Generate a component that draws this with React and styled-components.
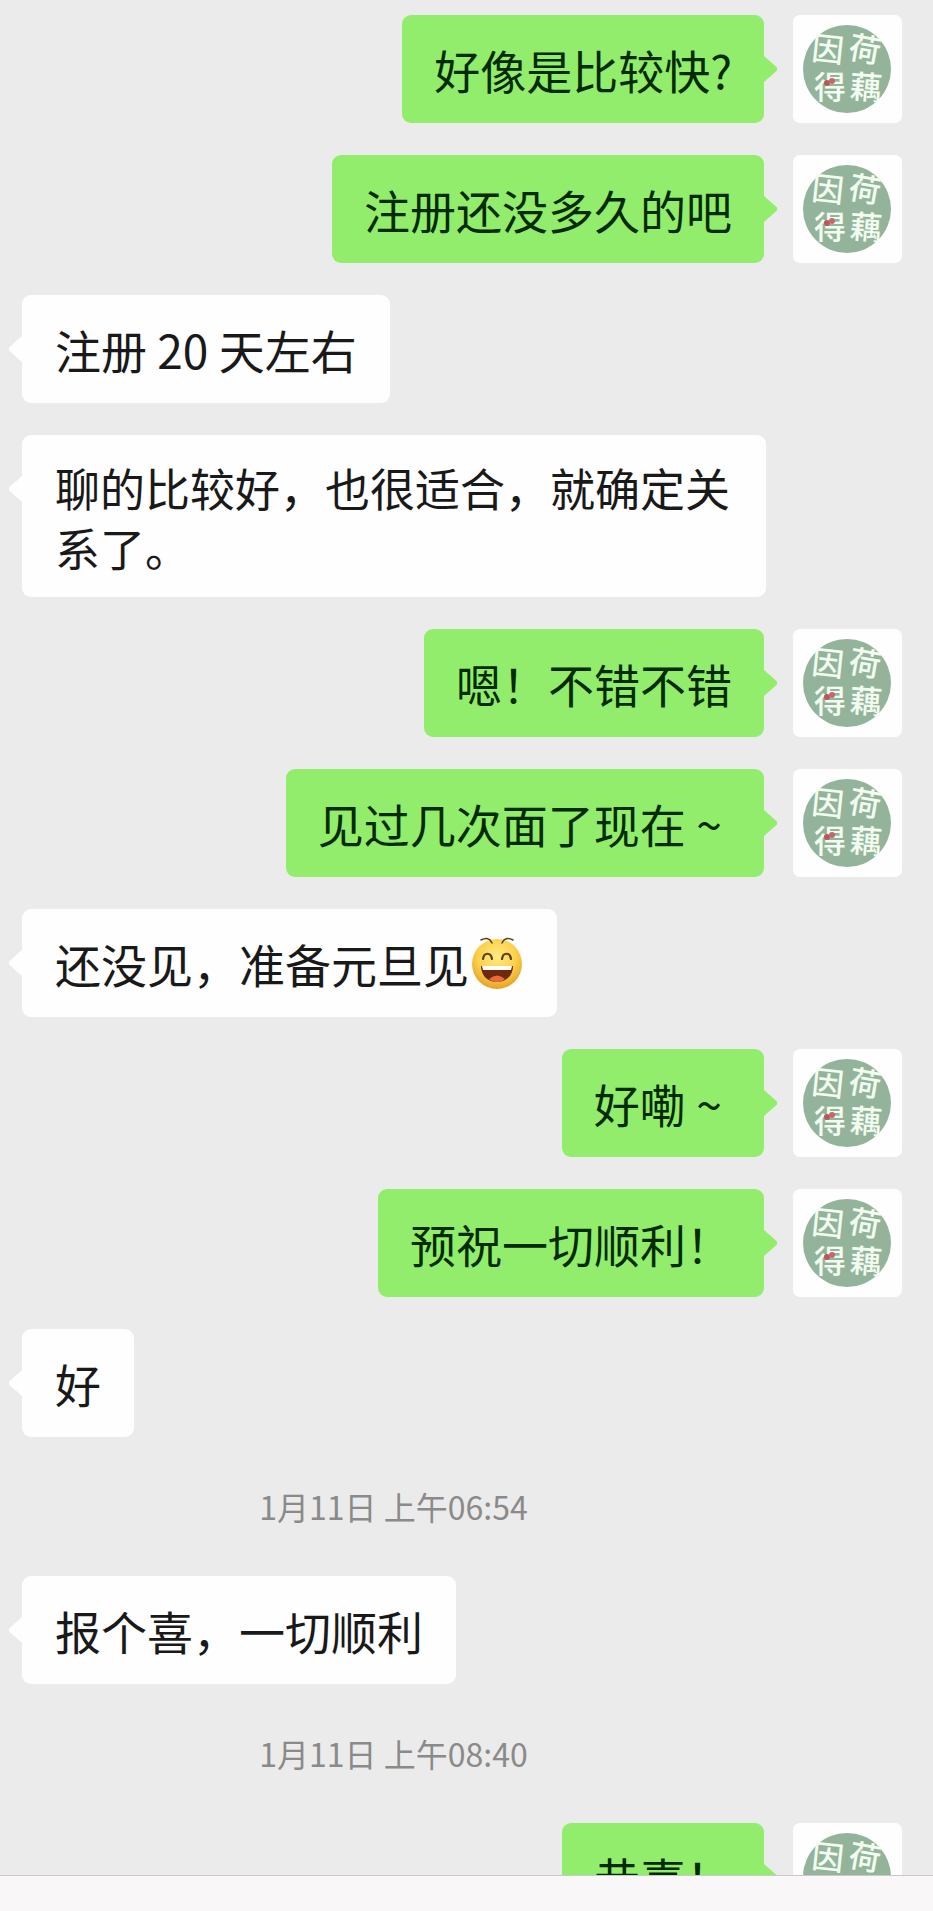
import React from 'react';
import styled, { createGlobalStyle } from 'styled-components';

const GlobalStyle = createGlobalStyle`
  * {
    box-sizing: border-box;
  }

  body {
    margin: 0;
    background-color: #ebebeb;
    font-family: 'Noto Sans CJK SC', 'Noto Sans', sans-serif;
  }
`;

const Page = styled.div`
  display: flex;
  flex-direction: column;
  height: 100vh;
  overflow: hidden;
`;

const Chat = styled.main`
  display: flex;
  flex-direction: column;
  flex: 1;
  gap: 32px;
  min-height: 0;
  padding: 15px 31px 0 22px;
  overflow: hidden;
`;

const InputBar = styled.footer`
  flex: none;
  height: 36px;
  border-top: 1px solid #c9c8ca;
  background-color: #f9f7f8;
`;

const MessageRow = styled.div`
  display: flex;
  flex: none;
  align-items: flex-start;
  justify-content: ${(attr) => (attr.$mine ? 'flex-end' : 'flex-start')};
  gap: 29px;
`;

const Bubble = styled.div`
  position: relative;
  display: flex;
  align-items: center;
  max-width: 744px;
  padding: ${(attr) => (attr.$long ? '23px' : '24px')} ${(attr) => (attr.$mine ? '32px' : '33px')} ${(attr) => (attr.$long ? '19px' : '24px')};
  border-radius: 9px;
  background-color: ${(attr) => (attr.$mine ? '#93ed6c' : '#fefefe')};
  color: ${(attr) => (attr.$mine ? '#032b02' : '#191919')};
  font-size: ${(attr) => (attr.$long ? '45px' : '46px')};
  line-height: 60px;

  &::after {
    content: '';
    position: absolute;
    top: 41px;
    ${(attr) => (attr.$mine ? 'left: 100%;' : 'right: 100%;')}
    width: 13px;
    height: 26px;
    background-color: inherit;
    clip-path: ${(attr) => (attr.$mine
    ? 'polygon(0 0, 100% 44%, 100% 56%, 0 100%)'
    : 'polygon(100% 0, 0 44%, 0 56%, 100% 100%)')};
  }
`;

const Time = styled.time`
  flex: none;
  padding-left: 9px;
  padding-right: 146px;
  color: #8a8a8a;
  font-size: 32px;
  line-height: 75px;
  text-align: center;
`;

const AvatarFrame = styled.svg`
  flex: none;
  width: 109px;
  height: 108px;
  border-radius: 7px;
  background-color: #fefefe;
`;

const AvatarText = styled.text`
  fill: #f2fcf0;
  font-size: 32px;
  font-weight: 500;
  text-anchor: middle;
`;

const EmojiIcon = styled.svg`
  flex: none;
  width: 55px;
  height: 56px;
`;

function Avatar() {
  return (
    <AvatarFrame viewBox="0 0 109 108" role="img" aria-label="头像">
      <circle cx="54" cy="54" r="44" fill="#93b49b" />
      <AvatarText x="35" y="46" transform="rotate(6 35 34)">因</AvatarText>
      <AvatarText x="72" y="46" transform="rotate(10 72 34)">荷</AvatarText>
      <AvatarText x="37" y="84">得</AvatarText>
      <AvatarText x="73" y="84" transform="rotate(4 73 72)">藕</AvatarText>
      <circle cx="34" cy="68" r="3" fill="#b9575c" />
      <circle cx="39" cy="66" r="3" fill="#c4666a" />
    </AvatarFrame>
  );
}

function LaughEmoji() {
  return (
    <EmojiIcon viewBox="0 0 55 56" role="img" aria-label="大笑">
      <defs>
        <radialGradient id="face" cx="50%" cy="35%" r="65%">
          <stop offset="0" stopColor="#ffe984" />
          <stop offset="0.6" stopColor="#fbd04a" />
          <stop offset="1" stopColor="#e5a127" />
        </radialGradient>
      </defs>
      <circle cx="28" cy="29" r="25" fill="url(#face)" />
      <g fill="none" stroke="#5c4011" strokeLinecap="round">
        <path d="M12 5 Q20 1 23 8" strokeWidth="1.5" />
        <path d="M44 5 Q36 1 33 8" strokeWidth="1.5" />
        <path d="M14 24 C15 17 22 17 23 24" strokeWidth="2.2" />
        <path d="M33 24 C34 17 41 17 42 24" strokeWidth="2.2" />
      </g>
      <path d="M12 31 H44 C44 40 38 47 28 47 S12 40 12 31 Z" fill="#6b2a10" />
      <path d="M13 31 H43 L42 35 H14 Z" fill="#fffdf5" />
      <path d="M20 44 Q28 37 36 44 Q33 47 28 47 T20 44 Z" fill="#ea6a3c" />
    </EmojiIcon>
  );
}

const messages = [
  { mine: true, text: '好像是比较快?' },
  { mine: true, text: '注册还没多久的吧' },
  { text: '注册 20 天左右' },
  { text: '聊的比较好，也很适合，就确定关系了。', long: true },
  { mine: true, text: '嗯！不错不错' },
  { mine: true, text: '见过几次面了现在\u00a0~\u00a0' },
  { text: '还没见，准备元旦见', emoji: true },
  { mine: true, text: '好嘞\u00a0~\u00a0' },
  { mine: true, text: '预祝一切顺利！' },
  { text: '好' },
  { time: '1月11日 上午06:54' },
  { text: '报个喜，一切顺利' },
  { time: '1月11日 上午08:40' },
  { mine: true, text: '恭喜！' },
];

function Message({ mine, text, long, emoji }) {
  return (
    <MessageRow $mine={mine}>
      <Bubble $mine={mine} $long={long}>
        {text}
        {emoji ? <LaughEmoji /> : null}
      </Bubble>
      {mine ? <Avatar /> : null}
    </MessageRow>
  );
}

export default function App() {
  return (
    <Page>
      <GlobalStyle />
      <Chat>
        {messages.map((item) => (
          item.time
            ? <Time key={item.time}>{item.time}</Time>
            : <Message key={item.text} {...item} />
        ))}
      </Chat>
      <InputBar />
    </Page>
  );
}
